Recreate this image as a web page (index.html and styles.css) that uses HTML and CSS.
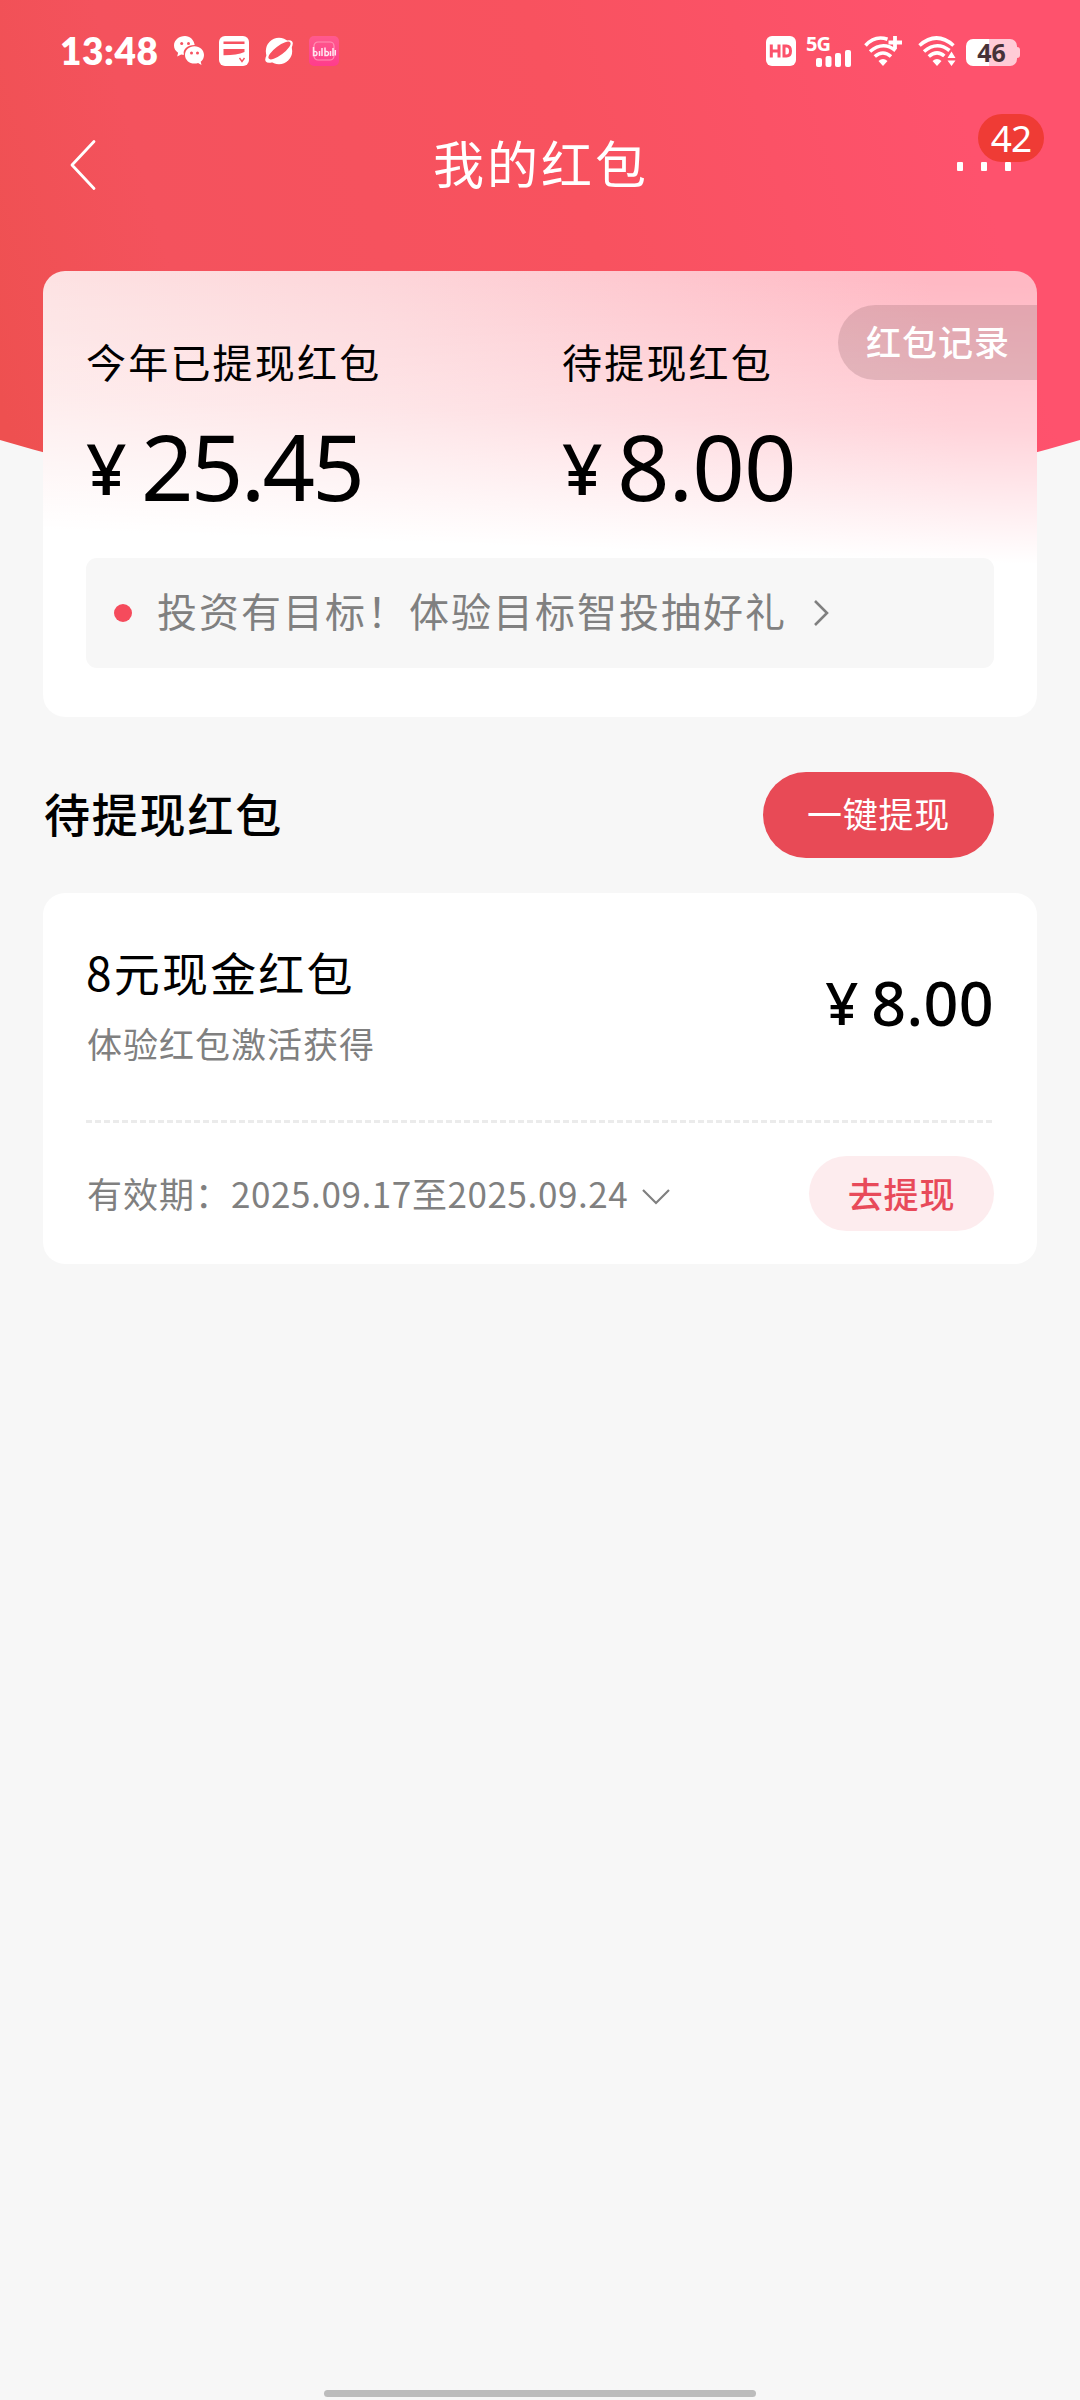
FILE: index.html
```html
<!DOCTYPE html>
<html lang="zh-CN">
<head>
<meta charset="utf-8">
<title>我的红包</title>
<link rel="stylesheet" href="styles.css">
</head>
<body>
<div class="screen">
  <div class="hero-bg"></div>
  <header class="status">
    <div class="status-left">
      <span class="clock">13:48</span>
      <svg class="app-icon" viewBox="0 0 30 30"><path fill="#fff" d="M11 0C4.900 0 0 4.200 0 9.500c0 3 1.600 5.600 4.100 7.300L3.200 20.500l4-2.100c.9.200 1.800.4 2.800.4C8.400 13.500 13 9.100 20.700 9 20 3.900 16 0 11 0z"/><path fill="#fff" d="M20.500 10.200c-5.300 0-9.500 3.900-9.500 8.700s4.200 8.700 9.500 8.700c1.300 0 2.500-.2 3.600-.6l3.400 2-.8-3.200c2-1.600 3.300-4.100 3.300-6.900 0-4.800-4.200-8.700-9.500-8.700z"/><g fill="#f75260"><circle cx="7.700" cy="7.500" r="1.500"/><circle cx="14.500" cy="7.500" r="1.500"/><circle cx="17.500" cy="17" r="1.500"/><circle cx="23.500" cy="17" r="1.500"/></g></svg>
      <svg class="app-icon" viewBox="0 0 30 30"><rect width="30" height="30" rx="6" fill="#fff"/><path d="M4.500 5.500h21V8h-21zM4.500 13h21v3q-8 3.400-21 3.300z" fill="#f75260"/><path d="M20.500 22l2.500 3.500 2.500-3.500" fill="none" stroke="#f75260" stroke-width="1.400"/></svg>
      <svg class="app-icon" viewBox="0 0 30 30"><circle cx="15" cy="15" r="13.200" fill="#fff"/><ellipse cx="15" cy="15.500" rx="16.500" ry="6.600" transform="rotate(-37 15 15.500)" fill="#fff"/><ellipse cx="15.500" cy="14.500" rx="13.500" ry="4.500" transform="rotate(-37 15.500 14.500)" fill="#f75260"/></svg>
      <svg class="app-icon" viewBox="0 0 30 30"><defs><linearGradient id="pink" x2="0" y2="1"><stop stop-color="#ff5a8d"/><stop offset="1" stop-color="#ff3c8c"/></linearGradient></defs><rect width="30" height="30" rx="5" fill="url(#pink)"/><rect x="5" y="6" width="20" height="18" rx="4" fill="none" stroke="#ff91b4" stroke-width="1.200"/><path d="M4.500 11v8.500q3.500.5 3.500-2t-3-2M10.500 15v5M13 12v8M16 11.500v8q3.500.5 3.500-2t-3-2M21.500 15v5M24 12v8M26.300 14v5.500" fill="none" stroke="#ffe6ef" stroke-width="1.500"/></svg>
    </div>
    <div class="status-right">
      <svg width="30" height="30" viewBox="0 0 30 30"><rect width="30" height="30" rx="6" fill="#fff"/><path d="M5.300 8.500v13M13 8.500v13M5.300 15H13M18 10h2.500q4 0 4 5t-4 5H18z" fill="none" stroke="#fc526b" stroke-width="3"/></svg>
      <div class="signal"><span class="net">5G</span><svg class="bars" width="36" height="17" viewBox="0 0 36 17" fill="#fff"><rect y="8" width="6" height="9" rx="2"/><rect x="9.500" y="6" width="6" height="11" rx="2"/><rect x="19" y="3" width="6" height="14" rx="2"/><rect x="29" width="6" height="17" rx="2"/></svg></div>
      <svg class="wifi" width="40" height="32" viewBox="0 0 40 32"><g fill="none" stroke="#fff" stroke-width="3.600"><path d="M1.500 10.500Q11 0 23.500 4.300M6 16.500q13-11 25.500-1M10.800 21.500q8.200-7 16.200 0"/><path d="M31 1v13M24.500 7.500H38" stroke-width="3.800"/></g><path d="M14.500 26q4.500-4 9 0L19 31z" fill="#fff"/></svg>
      <svg class="wifi second" width="40" height="32" viewBox="0 0 40 32"><g fill="none" stroke="#fff" stroke-width="3.600"><path d="M1.500 10.500q17-15 34 0M6 16.500q13-11 25.500-1M10.800 21.500q8.200-7 15.500-.5"/></g><path d="M14.500 26q4.500-4 9 0L19 31zM29.500 23l4-6.500 4 6.500zM29.500 25.500h8l-4 5.500z" fill="#fff"/></svg>
      <div class="battery"><span>46</span></div>
    </div>
  </header>
  <nav class="nav">
    <svg class="back" width="28" height="52" viewBox="0 0 28 52"><path d="M25 2.500L3 26l22 23.500" fill="none" stroke="#fff" stroke-width="2.800" stroke-linecap="round" stroke-linejoin="round"/></svg>
    <h1>我的红包</h1>
    <div class="more"><i></i><i></i><i></i><span class="badge">42</span></div>
  </nav>
  <main>
    <section class="summary">
      <div class="totals">
        <div class="total"><div class="label">今年已提现红包</div><div class="amount"><span class="yen">¥</span><span class="first">25.45</span></div></div>
        <div class="total"><div class="label">待提现红包</div><div class="amount"><span class="yen">¥</span><span>8.00</span></div></div>
        <div class="record">红包记录</div>
      </div>
      <div class="notice"><i class="dot"></i><span>投资有目标！体验目标智投抽好礼</span><svg width="20" height="30" viewBox="0 0 20 30"><path d="M3 3l12 12L3 27" fill="none" stroke="#808080" stroke-width="2.600"/></svg></div>
    </section>
    <div class="section-head"><h2>待提现红包</h2><button class="withdraw-all">一键提现</button></div>
    <section class="packet">
      <div class="packet-top">
        <div><h3>8元现金红包</h3><p>体验红包激活获得</p></div>
        <div class="price"><span class="price-yen">¥</span><span>8.00</span></div>
      </div>
      <div class="divider"></div>
      <div class="packet-bottom">
        <span class="validity">有效期：<span class="dates">2025.09.17至2025.09.24</span></span>
        <svg class="expand" width="30" height="20" viewBox="0 0 30 20"><path d="M2 3l13 13L28 3" fill="none" stroke="#808080" stroke-width="2.200"/></svg>
        <button class="withdraw">去提现</button>
      </div>
    </section>
  </main>
  <div class="home-bar"></div>
</div>
</body>
</html>
```
FILE: styles.css
```css
* { box-sizing: border-box; margin: 0; padding: 0; }
body { background: #f7f7f7; font-family: "Noto Sans CJK SC", sans-serif; color: #000; }
svg { display: block; flex: none; }
button { border: 0; font-family: inherit; }
.screen { position: relative; width: 1080px; height: 2400px; display: flex; flex-direction: column; overflow: hidden; }
.hero-bg { position: absolute; inset: 0 0 auto; height: 530px; background: linear-gradient(74deg, #ee5050 3%, #f4525d 20%, #f8525f 55%, #fe526d 88%); clip-path: path("M0 0H1080V440Q540 600 0 440Z"); }
.status, .nav, main { position: relative; }
.status { height: 100px; padding: 36px 60px 0 60px; display: flex; justify-content: space-between; align-items: flex-start; color: #fff; }
.status-left { display: flex; gap: 15px; }
.clock { width: 99px; height: 30px; font: 800 37px/30px Lato, sans-serif; letter-spacing: .6px; white-space: nowrap; }
.app-icon { width: 30px; height: 30px; }
.status-right { display: flex; }
.signal { width: 46px; height: 30px; margin-left: 10px; display: flex; flex-direction: column; }
.net { font: 700 20px/15px "Noto Sans", sans-serif; letter-spacing: -1px; height: 14px; }
.bars { margin-left: 10px; }
.wifi { margin-left: 12px; margin-top: -1px; }
.wifi.second { margin-left: 14px; }
.battery { position: relative; width: 51px; height: 27px; margin: 3px 3px 0 8px; border-radius: 7px; background: linear-gradient(90deg, #fff 46%, #ffcbd6 46%); color: #463238; text-align: center; font: 700 25px/27px "Noto Sans", sans-serif; }
.battery::after { content: ""; position: absolute; left: 51px; top: 8px; width: 3px; height: 11px; background: #ffcbd6; border-radius: 0 3px 3px 0; }
.nav { height: 171px; padding: 39px 69px 0 69px; display: flex; justify-content: space-between; align-items: flex-start; color: #fff; }
.nav h1 { margin-left: 28px; margin-top: -1px; font-size: 51px; line-height: 48px; font-weight: 400; letter-spacing: 3px; }
.more { position: relative; width: 54px; display: flex; gap: 18px; padding-top: 23px; }
.more i { width: 6px; height: 9px; background: #fff; border-radius: 1px; }
.badge { position: absolute; left: 21px; top: -25px; width: 66px; height: 48px; border-radius: 24px; background: #ef3b35; text-align: center; font: 400 37px/47px "Noto Sans", sans-serif; letter-spacing: -1px; }
main { padding: 0 43px; }
.summary { position: relative; height: 446px; border-radius: 22px; overflow: hidden; padding: 70px 43px 0; background: linear-gradient(182deg, rgba(255,255,255,0) 3%, rgba(255,255,255,.38) 33%, #fff 61%), linear-gradient(80deg, #fde3e3 0%, #fdd5d9 38%, #ffb9c4 90%); }
.totals { display: flex; height: 217px; }
.total { width: 476px; flex: none; }
.label { font-size: 40px; line-height: 40px; letter-spacing: 2.200px; }
.amount { display: flex; align-items: baseline; margin-top: 26px; font: 400 92px/118px "Noto Sans", sans-serif; }
.amount span { letter-spacing: -1px; }
.amount .first { letter-spacing: -2.800px; }
.amount .yen { width: 55px; font-size: 71px; font-weight: 500; transform: translateY(-6px); }
.record { position: absolute; right: 0; top: 34px; width: 199px; height: 75px; padding-left: 28px; border-radius: 38px 0 0 38px; background: rgba(100, 60, 65, .18); color: #fff; font-size: 35px; line-height: 71px; font-weight: 500; letter-spacing: 1px; }
.notice { height: 110px; border-radius: 11px; background: #f7f7f7; padding-left: 28px; display: flex; align-items: center; color: #808080; font-size: 40px; line-height: 50px; letter-spacing: 2px; }
.notice span { margin: -6px 25px 0 25px; }
.dot { width: 18px; height: 18px; border-radius: 50%; background: #f54b5c; }
.section-head { height: 176px; padding: 55px 43px 0 1px; display: flex; justify-content: space-between; align-items: flex-start; }
.section-head h2 { font-size: 46px; line-height: 80px; font-weight: 500; letter-spacing: 1.800px; }
.withdraw-all { width: 231px; height: 86px; border-radius: 43px; background: #e84a56; color: #fff; font-size: 35px; line-height: 80px; padding-bottom: 4px; letter-spacing: .8px; }
.packet { height: 371px; border-radius: 22px; background: #fff; padding: 0 43px; }
.packet-top { height: 227px; padding-top: 50px; display: flex; justify-content: space-between; }
.packet h3 { font-size: 46px; line-height: 56px; font-weight: 400; letter-spacing: 2.200px; }
.packet p { margin-top: 19px; padding-left: 1px; color: #808080; font-size: 35px; line-height: 50px; letter-spacing: 1px; }
.price { display: flex; font: 500 61px/120px "Noto Sans", sans-serif; letter-spacing: .4px; }
.price-yen { width: 46px; font-size: 58px; }
.divider { height: 3px; background: repeating-linear-gradient(90deg, #ebebeb 0 6px, transparent 6px 9px); }
.packet-bottom { height: 142px; display: flex; align-items: center; padding-bottom: 2px; }
.validity { color: #808080; font-size: 35px; line-height: 50px; letter-spacing: 1px; padding-left: 1px; }
.dates { letter-spacing: .6px; }
.expand { margin: 7px 0 0 13px; }
.withdraw { margin-left: auto; width: 185px; height: 75px; border-radius: 38px; background: #fdecee; color: #e84a5a; font-size: 35px; font-weight: 500; line-height: 71px; padding-bottom: 2px; letter-spacing: .8px; }
.home-bar { width: 432px; height: 7px; margin: auto auto 3px; border-radius: 4px; background: #bcbcbc; }
```
